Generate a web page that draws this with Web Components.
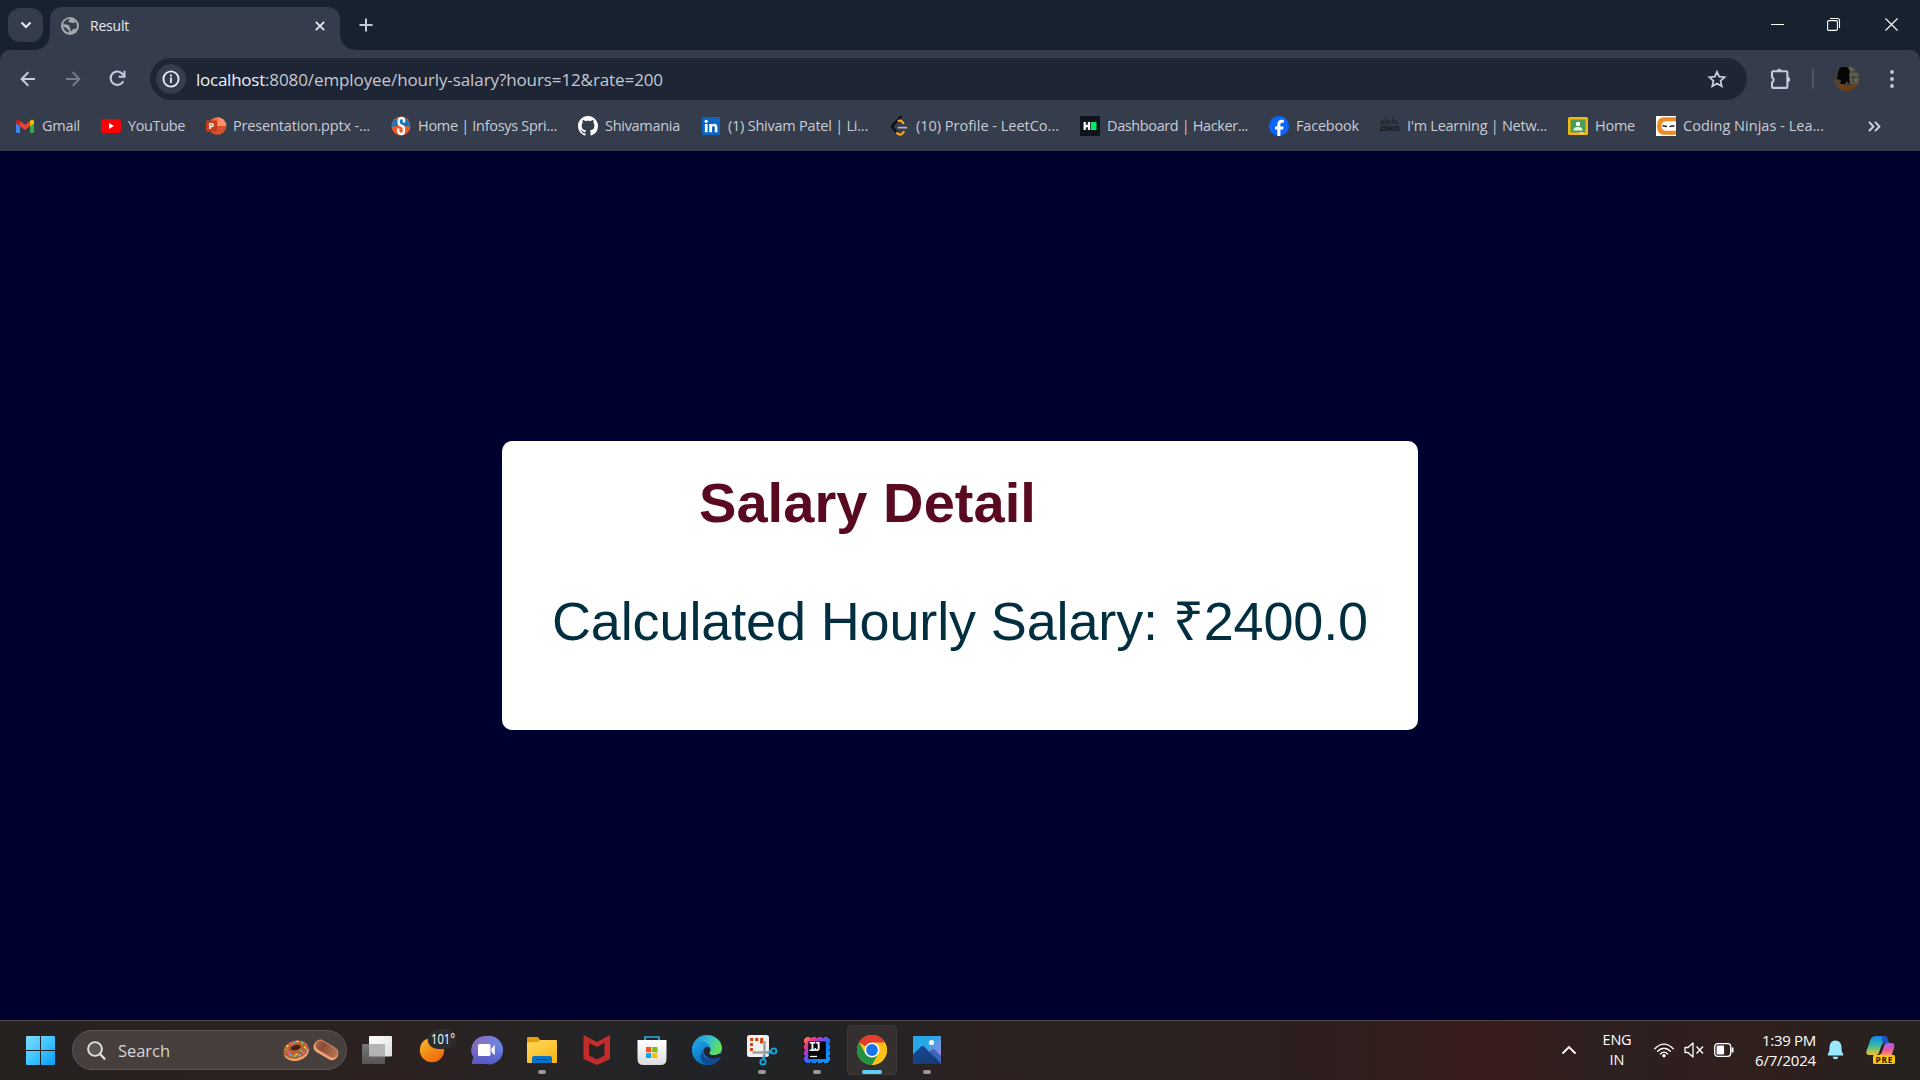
<!DOCTYPE html>
<html lang="en">
<head>
<meta charset="utf-8">
<title>Result</title>
<style>
html,body{margin:0;height:100%;overflow:hidden}
body{font-family:"Open Sans","Noto Sans",sans-serif;background:#00002f}
</style>
</head>
<body>
<desktop-screen>
  <tab-strip slot="browser">Result</tab-strip>
  <tool-bar slot="browser"><fit-text w="69" style="color:#eef0f6">localhost</fit-text><fit-text w="398">:8080/employee/hourly-salary?hours=12&amp;rate=200</fit-text></tool-bar>
  <bookmark-bar slot="browser">
    <bookmark-item icon="gmail" w="38">Gmail</bookmark-item>
    <bookmark-item icon="youtube" w="57">YouTube</bookmark-item>
    <bookmark-item icon="ppt" w="137">Presentation.pptx -...</bookmark-item>
    <bookmark-item icon="spring" w="139">Home | Infosys Spri...</bookmark-item>
    <bookmark-item icon="github" w="75">Shivamania</bookmark-item>
    <bookmark-item icon="linkedin" w="140">(1) Shivam Patel | Li...</bookmark-item>
    <bookmark-item icon="leetcode" w="143">(10) Profile - LeetCo...</bookmark-item>
    <bookmark-item icon="hacker" w="141">Dashboard | Hacker...</bookmark-item>
    <bookmark-item icon="facebook" w="63">Facebook</bookmark-item>
    <bookmark-item icon="cisco" w="140">I'm Learning | Netw...</bookmark-item>
    <bookmark-item icon="classroom" w="40">Home</bookmark-item>
    <bookmark-item icon="ninjas" w="141">Coding Ninjas - Lea...</bookmark-item>
  </bookmark-bar>
  <salary-card slot="page">
    <fit-text slot="title" w="337">Salary Detail</fit-text>
    <fit-text slot="value" w="816">Calculated Hourly Salary: ₹2400.0</fit-text>
  </salary-card>
  <task-bar slot="taskbar">
    <task-app icon="taskview"></task-app>
    <task-app icon="weather"></task-app>
    <task-app icon="chat"></task-app>
    <task-app icon="folder" running></task-app>
    <task-app icon="mcafee"></task-app>
    <task-app icon="store"></task-app>
    <task-app icon="edge"></task-app>
    <task-app icon="snip" running></task-app>
    <task-app icon="intellij" running></task-app>
    <task-app icon="chrome" running active></task-app>
    <task-app icon="photos" running></task-app>
  </task-bar>
</desktop-screen>
<script>
const FONT = 'font-family="Open Sans" font-weight="700"';
// name: [width, height, markup]
const ICONS = {
chevdown:[12,8,'<path d="M1.5 1.5 6 6l4.500-4.500" fill="none" stroke="#e6e9f2" stroke-width="2.200"/>'],
globe:[18,18,'<circle cx="9" cy="9" r="9" fill="#a4a7ac"/><path d="M8.500 1.800C6 1.800 2.800 4 2.200 7.200l3.300.3c2 .2 3 1 3 2.500 0 1 .9 1 1 1.900v2.300c1.500 0 1.800-.6 2-1.400.2-1 1.200-1.400 1.600-.7 1 .2 2-.5 2.600-1.700.5-2.300 0-4.500-1.400-6-.3 1.200-1 1.700-2.300 1.600-1.500 0-1.700-.6-2.800-.6-1.400 0-2-.7-1.800-1.700.2-.8 1.500-.4 1.100-1.900z" fill="#353c4b"/><path d="M2 8.600c.4 3.700 2.600 6.400 6 7.200v-2.300c-1.600-.3-2-1.100-2-2.400-2-.3-3.200-1-4-2.500z" fill="#353c4b"/>'],
tabclose:[10,10,'<path d="M.8.800l8.400 8.400M9.200.8.800 9.200" stroke="#e8eaf0" stroke-width="1.800"/>'],
plus:[14,14,'<path d="M7 .5v13M.5 7h13" stroke="#c3c9db" stroke-width="2"/>'],
min:[13,13,'<path d="M0 6.500h13" stroke="#fff"/>'],
max:[13,13,'<rect x=".6" y="2.600" width="9.800" height="9.800" rx="1.200" fill="none" stroke="#fff" stroke-width="1.100"/><path d="M3 .5h7.500a2 2 0 0 1 2 2V10" fill="none" stroke="#fff" stroke-width="1.100"/>'],
close:[13,13,'<path d="M.5.500l12 12M12.500.5l-12 12" stroke="#fff" stroke-width="1.100"/>'],
back:[16,16,'<path d="M15 8H2M8.300 1.300 1.600 8l6.700 6.700" fill="none" stroke="#c3cbe0" stroke-width="2"/>'],
fwd:[16,16,'<path d="M1 8h13M7.700 1.300 14.400 8l-6.700 6.700" fill="none" stroke="#757c8b" stroke-width="2"/>'],
reload:[17,17,'<path d="M14.300 11.200A6.700 6.700 0 1 1 13.700 4.200L15.200 6" fill="none" stroke="#c3cbe0" stroke-width="2.100"/><path d="M15.500.8v6H9.600" fill="none" stroke="#c3cbe0" stroke-width="2"/>'],
info:[30,30,'<circle cx="15" cy="15" r="15" fill="#353c4b"/><circle cx="15" cy="15" r="7.600" fill="none" stroke="#e6e9f2" stroke-width="1.900"/><path d="M15 13.500V19M15 10.500v2" stroke="#e6e9f2" stroke-width="1.800"/>'],
star:[20,20,'<path d="M10 2.800 12.200 7.600l5.400.6-4 3.700 1.100 5.300L10 14.500l-4.700 2.700 1.100-5.300-4-3.700 5.400-.6z" fill="none" stroke="#c8ccd8" stroke-width="1.800"/>'],
ext:[22,22,'<path d="M3 4.500q0-1.200 1.200-1.200h4.300h4.200h4.500q1.200 0 1.200 1.200v4.700v4v5.500q0 1.200-1.200 1.200H4.200q-1.200 0-1.200-1.200v-4.300a2.900 2.900 0 0 0 0-5.200z" fill="none" stroke="#c3cbe0" stroke-width="2.100" stroke-linejoin="round"/><path d="M7.700 3.500a2.500 2.700 0 0 1 5 0zM18.600 8.900a2.600 2.500 0 0 1 0 5z" fill="#c3cbe0"/>'],
avatar:[25,25,'<defs><clipPath id="a"><circle cx="12.500" cy="12.500" r="12.500"/></clipPath></defs><g clip-path="url(#a)"><rect width="25" height="25" fill="#3f3f38"/><path d="M15 0h10v18h-10z" fill="#5d604f"/><path d="M17 6h8M15 11h10M21 0v6M19 11v6" stroke="#34352d"/><path d="M6 1 13 1l3 4-1 5 1 8-4-3-1 4H6l1-5-4-1 1-6z" fill="#060505"/><path d="M0 14h5l2 5-6 1z" fill="#494735"/><path d="M2 18l8 0 5 2 7-3 3 3-4 5H5z" fill="#6b4018"/></g>'],
dots:[4,18,'<g fill="#c3cbe0"><circle cx="2" cy="2" r="1.900"/><circle cx="2" cy="9" r="1.900"/><circle cx="2" cy="16" r="1.900"/></g>'],
more:[13,11,'<path d="M1 .8 5.500 5.500 1 10.200M7 .8l4.500 4.700L7 10.200" fill="none" stroke="#d2d6e0" stroke-width="1.900"/>'],
gmail:[20,20,'<path d="M1 5.500v10.200q0 1.300 1.200 1.300H5V8.200z" fill="#4285f4"/><path d="M19 5.500v10.200q0 1.300-1.200 1.300H15V8.200z" fill="#34a853"/><path d="M15 5l1.200-1c1.200-.8 2.800 0 2.800 1.500v2L15 10.300z" fill="#fbbc04"/><path d="M5 10.300V5l5 3.800L15 5v5.300L10 14z" fill="#ea4335"/><path d="M1 7.500v-2C1 4 2.600 3.200 3.800 4L5 5v5.300z" fill="#c5221f"/>'],
youtube:[20,20,'<rect y="3" width="20" height="14" rx="3.200" fill="#f00"/><path d="M8 7v6l5-3z" fill="#fff"/>'],
ppt:[20,20,'<circle cx="11.500" cy="10" r="8.800" fill="#d35230"/><path d="M11.500 1.200A8.800 8.800 0 0 0 2.700 10h8.800z" fill="#ed6c47"/><path d="M11.500 1.200a8.800 8.800 0 0 1 8.800 8.800h-8.800z" fill="#ff8f6b"/><rect y="4.500" width="11" height="11" rx="1" fill="#c43e1c"/><text x="2.400" y="13.300" font-size="9" '+FONT+' fill="#fff">P</text>'],
spring:[20,20,'<circle cx="10" cy="10" r="9.500" fill="#f05a28"/><path d="M.5 11a9.500 9.500 0 1 1 19 0L10 9z" fill="#1478be"/><path d="M13 6.500V4.200Q13 2 10.500 2T7.700 4.500v2.600q0 1.700 2.600 2.600t2.600 3v2.500q0 2.800-2.700 2.800T7.200 15v-2.500" fill="none" stroke="#fff" stroke-width="2.400"/>'],
github:[20,20,'<path transform="scale(1.250)" fill="#fff" d="M8 0C3.580 0 0 3.580 0 8c0 3.540 2.290 6.530 5.470 7.590.4.070.55-.17.55-.38 0-.19-.01-.82-.01-1.490-2.010.37-2.530-.49-2.690-.94-.09-.23-.48-.94-.82-1.130-.28-.15-.68-.52-.01-.53.63-.01 1.080.58 1.230.82.72 1.210 1.870.87 2.330.66.07-.52.28-.87.510-1.070-1.780-.2-3.640-.89-3.640-3.950 0-.87.310-1.590.82-2.150-.08-.2-.36-1.020.08-2.120 0 0 .67-.21 2.200.82.64-.18 1.320-.27 2-.27s1.360.09 2 .27c1.530-1.040 2.200-.82 2.200-.82.44 1.100.16 1.920.08 2.120.51.56.82 1.270.82 2.150 0 3.070-1.870 3.750-3.650 3.950.29.25.54.73.54 1.480 0 1.070-.01 1.930-.01 2.200 0 .21.15.46.55.38A8.010 8.010 0 0 0 16 8c0-4.420-3.580-8-8-8z"/>'],
linkedin:[20,20,'<rect x="1" y="1" width="18" height="18" rx="1" fill="#0a66c2"/><g fill="#fff"><circle cx="5.200" cy="5.300" r="1.600"/><path d="M3.900 8h2.700v8.200H3.900zM8.300 8h2.500v1.200c.6-.9 1.500-1.400 2.600-1.400 2.200 0 3 1.400 3 3.700v4.700h-2.600v-4.300c0-1.200-.3-1.900-1.300-1.900s-1.500.7-1.500 1.900v4.300H8.300z"/></g>'],
leetcode:[20,20,'<path d="M12 .8 4.500 8.200Q2.300 10.500 4.500 12.800l3.300 3.700" fill="none" stroke="#0a0a0a" stroke-width="2.100" stroke-linecap="round"/><path d="M9.500 4.800q2-.6 3.500.8l1.300 1.500M8 17l1 1q2 1.200 3.900 0l1.800-1.900" fill="none" stroke="#ffa116" stroke-width="2.200" stroke-linecap="round"/><path d="M9.500 11.700h8" stroke="#b3b3b3" stroke-width="1.700" stroke-linecap="round"/>'],
hacker:[20,20,'<rect width="20" height="20" fill="#0e141e"/><path d="M4.700 6v8M9 6v8M4.700 10H9" stroke="#fff" stroke-width="2.300"/><rect x="11" y="6" width="5.500" height="8" fill="#00ea64"/>'],
facebook:[20,20,'<circle cx="10" cy="10" r="10" fill="#0866ff"/><path d="M8.300 20v-6.500H6v-3h2.300V8.800c0-3.400 1.500-5 4.700-5 .7 0 1.400.1 1.800.2v2.700h-1.400c-1.500 0-2 .6-2 2v1.800h3.200l-.5 3h-2.700V20z" fill="#fff"/>'],
cisco:[20,20,'<path d="M1 5v4M3.300 4v4M5.600 1.500v6M8 4v4M10.300 5v4M12.600 1.500v6M15 4v4M17.300 5v4" stroke="#1b1f27" stroke-width="1.300" stroke-dasharray="1.600 .5"/><text x="-.3" y="15" font-size="8.500" textLength="20" font-family="Open Sans" font-weight="800" fill="#1b1f27">cisco</text>'],
classroom:[20,20,'<rect y="1" width="20" height="18" rx="1.500" fill="#f6b90c"/><rect x="2.500" y="3.500" width="15" height="13" fill="#4a9c5b"/><circle cx="10" cy="8" r="2.200" fill="#fff"/><path d="M5.500 14.500c0-3 2-3.500 4.500-3.500s4.500.5 4.500 3.500z" fill="#e6f4e8"/><path d="M11.500 16.500h4v1h-4z" fill="#eee"/>'],
ninjas:[20,20,'<rect width="20" height="20" fill="#fff"/><path d="M20 1.200H8Q1 1.200 1 10t7 8.800h12v-4H10q-4.500 0-4.500-4.800T10 5.200h10z" fill="#ee8b22"/><path d="M6.500 9.700 11 10.500M13.500 10.500l5-.8" stroke="#252525" stroke-width="1.500"/>'],
win:[30,30,'<defs><linearGradient id="w" x1="0" y1="0" x2="30" y2="30" gradientUnits="userSpaceOnUse"><stop stop-color="#80dcff"/><stop offset=".5" stop-color="#3cc4ff"/><stop offset="1" stop-color="#0799fa"/></linearGradient></defs><path transform="translate(0 1)" fill="url(#w)" d="M1 0h13v14H0V1q0-1 1-1zM15 0h13q1 0 1 1v13H15zM0 15h14v14H1q-1 0-1-1zM15 15h14v13q0 1-1 1H15z"/>'],
mag:[19,19,'<circle cx="8" cy="8" r="6.900" fill="#5a5654" stroke="#e3e1e0" stroke-width="1.900"/><path d="M13 13l4.500 4.700" stroke="#e3e1e0" stroke-width="2.300" stroke-linecap="round"/>'],
snacks:[56,24,'<defs><linearGradient id="sn" x2="1" y2="0"><stop stop-color="#b06a4c"/><stop offset=".3" stop-color="#8a4c38"/><stop offset="1" stop-color="#b97352"/></linearGradient></defs><g transform="rotate(-14 13 12)"><ellipse cx="13" cy="13.700" rx="12.700" ry="9" fill="#efa66c"/><ellipse cx="13" cy="11.400" rx="12.600" ry="9" fill="#b36232"/><ellipse cx="13.500" cy="9.700" rx="5.200" ry="2.700" fill="#43200f"/><path d="M8 10.500q5.500 4.500 11 0-2 5-11 0" fill="#d48b50"/></g><g stroke-width="1.700" stroke-linecap="round"><path d="M4 8.500l1-1M14 3.500h1M21.500 9l1 1M13 16.500l1-.3" stroke="#ffd443"/><path d="M8 5l1 1M5 14l1 .5M20 14.500l1-.5M23 6.500v.5" stroke="#fb5cb4"/><path d="M11 18h1M19 4.500l.5 1M3 11.500h.5M18 12.500h.5" stroke="#59e078"/><path d="M16 17.500l1-.5M24 12v.5M8 17l-1-.5M11 4.500h.5" stroke="#55bff5"/><path d="M9 14.500h1M18 8l1-.5M2.500 14v1" stroke="#f44848"/></g><g transform="rotate(31 43 11.500)"><rect x="30" y="6.500" width="26.500" height="12" rx="6" fill="#efaa78"/><rect x="30.700" y="5.600" width="25" height="10.400" rx="5.200" fill="url(#sn)" stroke="#dc9264" stroke-width=".9"/></g>'],
taskview:[40,40,'<defs><linearGradient id="tv" x2="1" y2="1"><stop stop-color="#fff"/><stop offset="1" stop-color="#dedede"/></linearGradient><linearGradient id="tv2" x2="0" y2="1"><stop stop-color="#777"/><stop offset="1" stop-color="#555"/></linearGradient></defs><rect x="12" y="6" width="23" height="20.500" rx="1" fill="url(#tv)"/><rect x="5" y="14" width="23" height="20" rx="1" fill="url(#tv2)"/><path d="M12 14h16v12.500H12z" fill="#b5b4b4"/>'],
weather:[40,40,'<defs><linearGradient id="we" x2=".7" y2="1"><stop stop-color="#f8bd2b"/><stop offset="1" stop-color="#f0660c"/></linearGradient></defs><circle cx="20" cy="20" r="12.200" fill="url(#we)"/><rect x="15.500" y="-1" width="29" height="20" rx="10" fill="#2c2d2e"/><text x="19" y="14" font-size="14" textLength="24" lengthAdjust="spacingAndGlyphs" font-family="Open Sans" font-weight="500" fill="#fff">101°</text>'],
chat:[40,40,'<defs><linearGradient id="ch" x1="0" y1=".2" x2="1" y2=".4"><stop stop-color="#8c69b8"/><stop offset="1" stop-color="#688be8"/></linearGradient><linearGradient id="ch2" x2="0" y2="1"><stop offset=".3" stop-color="#5558c8" stop-opacity="0"/><stop offset="1" stop-color="#5558c8"/></linearGradient></defs><path d="M19.500 6A14.200 14.200 0 1 1 19.500 34H6q-1.500 0-1-1.400l1.600-5A14 14 0 0 1 19.500 6z" fill="url(#ch)"/><path d="M19.500 6A14.200 14.200 0 1 1 19.500 34H6q-1.500 0-1-1.400l1.600-5A14 14 0 0 1 19.500 6z" fill="url(#ch2)"/><rect x="11" y="14" width="12.500" height="12" rx="1.500" fill="#fff"/><path d="M24.500 18.500 27.800 15V25.200L24.500 22z" fill="#fff"/>'],
folder:[40,40,'<defs><linearGradient id="fo" x2=".8" y2="1"><stop stop-color="#ffd95e"/><stop offset="1" stop-color="#f8b816"/></linearGradient></defs><path d="M5 8q0-1 1-1h10l2.500 3.500H34q1 0 1 1V16H5z" fill="#e2a10b"/><path d="M5 13q0-.7.8-.7h9.700L18.500 10H34q1 0 1 1v21q0 1-1 1H6q-1 0-1-1z" fill="url(#fo)"/><path d="M10 33V28q0-2 2-2h16q2 0 2 2v5z" fill="#0873c4"/><path d="M13.500 29.500h13" stroke="#064a8b"/>'],
mcafee:[40,40,'<path d="M6.500 5 20 12 33 5V29L20 35 6.500 29zM12 13v12.500l8 4 7.500-4V13L20 17z" fill="#c42c2c" fill-rule="evenodd"/>'],
store:[40,40,'<defs><linearGradient id="st" x2="0" y2="1"><stop stop-color="#fff"/><stop offset="1" stop-color="#dcdcdc"/></linearGradient></defs><path d="M13 12V7h14v5" fill="none" stroke="#24aee6" stroke-width="1.700"/><path d="M5.500 10h29V29q0 6-6 6h-17q-6 0-6-6z" fill="url(#st)"/><path d="M14 17h5.300v5.300H14z" fill="#f35325"/><path d="M20.200 17h5.300v5.300h-5.300z" fill="#81bc06"/><path d="M14 23.200h5.300V28H14z" fill="#05a6f0"/><path d="M20.200 23.200h5.300V28h-5.300z" fill="#ffba08"/>'],
edge:[40,40,'<defs><linearGradient id="e1" x1="0" y1=".2" x2="1" y2=".6"><stop stop-color="#178fd2"/><stop offset=".5" stop-color="#35bfd6"/><stop offset="1" stop-color="#66e34a"/></linearGradient><linearGradient id="e2" x1="0" y1="0" x2=".6" y2="1"><stop stop-color="#1fa6e8"/><stop offset="1" stop-color="#0868bd"/></linearGradient></defs><circle cx="20" cy="20" r="15" fill="#1272c4"/><path d="M5 20C5 11 12 5 20 5s15 6 15 13c0 6-8 9-12.500 6-.8-.8.900-1.700.900-4.500C23 14 18 11 13 12S6 16 5 20z" fill="url(#e1)"/><path d="M5 20c.3-6 5-8.500 9.300-8.500 5.700 0 8.700 3.500 9 7-1.400-2-6.500-1.500-7.300 3.500-.8 5.500 3.700 10.800 9.500 12C15 38 5 30 5 20z" fill="url(#e2)"/><path d="M16.200 21c-1 6 5 10 11.500 9 2-.3 4-1.300 5.500-2C30 34 23 37 18 34c-5-3.500-6-9-1.800-13z" fill="#114a91"/><path d="M16.500 20q2-4.500 6.800-2c.7 3.500-1.600 4.500-.8 6 2.300 1.800 7 1.600 12.500-.9v2L32 28c-5 2-15 1-15.500-8z" fill="#22242a"/><path d="M32.700 27c-4 2.500-10 2.300-13.300-.5 3 7 10 5.500 13.300.5z" fill="#114a91"/>'],
snip:[40,40,'<rect x="5" y="5" width="22" height="22" rx="2.500" fill="#f1f1f1"/><path d="M8.200 9.500h3M13.200 9.500h3M18.200 9.500h3M9.500 13v3M9.500 18v3M19.500 11v2.500" fill="none" stroke="#d83b01" stroke-width="2.800"/><path d="M22.500 11v13l-1.500 4M10.500 22.500h14l4-1.500" fill="none" stroke="#9aa0a5" stroke-width="2.400"/><g fill="none" stroke="#1ba1e0" stroke-width="1.900"><circle cx="31.800" cy="21" r="2.600"/><circle cx="21" cy="32" r="2.600"/><path d="M25.500 23.500l4-1.500M23 25.500 22 29"/></g>'],
intellij:[40,40,'<defs><linearGradient id="ij" x2="1" y2="1"><stop stop-color="#ff8a35"/><stop offset=".22" stop-color="#e8348b"/><stop offset=".42" stop-color="#7a49e8"/><stop offset=".6" stop-color="#087cfa"/><stop offset="1" stop-color="#1698f0"/></linearGradient></defs><rect x="7" y="7" width="26" height="26" fill="url(#ij)"/><path d="M7 7.400h26M7 32.600h26M7.400 7v26M32.600 7v26" stroke="#08080c" stroke-width=".9" stroke-dasharray="2 4"/><rect x="11.300" y="11.500" width="17.500" height="17.500" fill="#07040c"/><path d="M13 26.500h7" stroke="#fff" stroke-width="1.300"/><text x="11.800" y="21" font-size="12" font-family="Liberation Mono" font-weight="700" textLength="12" fill="#fff">IJ</text>'],
chrome:[40,40,'<circle cx="20" cy="20" r="15" fill="#fbc116"/><path d="M20 20 7 12.500A15 15 0 0 1 33 12.500z" fill="#e33b2e"/><path d="M7 12.500A15 15 0 0 0 20 35L26.500 23.700 13.500 23.700z" fill="#229342"/><path d="M20 12.500h13A15 15 0 0 1 20 35l6.500-11.300z" fill="#fbc116"/><circle cx="20" cy="20" r="7.500" fill="#fff"/><circle cx="20" cy="20" r="5.900" fill="#1a73e8"/>'],
photos:[40,40,'<defs><linearGradient id="ph" x2="1" y2=".9"><stop offset=".4" stop-color="#27a9e9"/><stop offset="1" stop-color="#b87dd6"/></linearGradient><linearGradient id="ph2" x2=".6" y2="1"><stop stop-color="#174c94"/><stop offset="1" stop-color="#143b77"/></linearGradient></defs><rect x="6" y="6" width="28" height="28" rx="1" fill="url(#ph)"/><path d="M19 25l6-5.500q1.300-1 2.500 0L34 26v7.500l-5 .5z" fill="#3d64b8"/><path d="M6 24.500l8-8q1.500-1.200 3 0L33.500 33q0 1-1 1H7q-1 0-1-1z" fill="url(#ph2)"/><circle cx="24.500" cy="12.500" r="2.600" fill="#f3f4f5"/>'],
up:[14,8,'<path d="M1 7l6-6 6 6" fill="none" stroke="#fff" stroke-width="1.800" stroke-linecap="round"/>'],
wifi:[20,15,'<g fill="none" stroke="#fff" stroke-width="1.350" stroke-linecap="round"><path d="M.8 5.700Q10-3.500 19.200 5.700M3.600 8.300q6.400-6.200 12.800 0M6.300 10.900q3.700-3.500 7.400 0"/></g><circle cx="10" cy="12.700" r="1.700" fill="#fff"/>'],
vol:[20,16,'<path d="M1 5.500h3L9 1v14l-5-4.500H1z" fill="none" stroke="#fff" stroke-width="1.300" stroke-linejoin="round"/><path d="M12.500 4.500l6.500 7M19 4.500l-6.500 7" stroke="#fff" stroke-width="1.300"/>'],
batt:[20,14,'<rect x=".7" y=".7" width="16" height="12.600" rx="3" fill="none" stroke="#fff" stroke-width="1.300"/><path d="M18.500 4.500v5" stroke="#fff" stroke-width="2"/><rect x="2.600" y="2.600" width="7.500" height="8.800" rx="1.200" fill="#fff"/>'],
bell:[17,20,'<path d="M8.500.5q5.700 0 6 6.500l.2 4 1.600 3.500q.3 1-.8 1h-14q-1.100 0-.8-1L2.300 11l.2-4Q2.800.5 8.500.5zM5.600 16.700h5.800q-.7 2.500-2.900 2.500T5.600 16.700z" fill="#99e8ff"/>'],
copilot:[30,30,'<defs><linearGradient id="c1" x2="0" y2="1"><stop stop-color="#1b82e8"/><stop offset=".45" stop-color="#2bb6b0"/><stop offset="1" stop-color="#f0c628"/></linearGradient><linearGradient id="c2" x2="0" y2="1"><stop stop-color="#ac5cf5"/><stop offset=".6" stop-color="#e75a9b"/><stop offset="1" stop-color="#ff9454"/></linearGradient></defs><path d="M9.500 1h9q2 0 3 3l1.200 4h-4q-2.500 0-3.300 2.800L13 17.500Q12.300 20 9.500 20h-6Q-.5 20 .5 16L4.500 4.500Q6 1 9.500 1z" fill="url(#c1)"/><path d="M16 1h3q2 0 2.700 3l1 4h-4q-1.500 0-2.200 1z" fill="#1c55c4"/><path d="M21 8h4q4 0 3.300 4l-2.500 8H12q3 0 4-3l2-6q.8-3 3-3z" fill="url(#c2)"/><rect x="7" y="20" width="22" height="9" rx="1.500" fill="#fdc60b"/><text x="9.500" y="27.600" font-size="8.300" textLength="17" '+FONT+' fill="#201a00">PRE</text>']
};
function el(name, html, after){
  customElements.define(name, class extends HTMLElement{
    connectedCallback(){
      if(this.shadowRoot) return;
      this.attachShadow({mode:'open'}).innerHTML = typeof html==='function' ? html(this) : html;
      if(after) after(this);
    }
  });
}
el('desktop-screen', `<style>
:host{display:flex;flex-direction:column;width:1920px;height:1080px;background:#00002f}
main{flex:1;display:flex;justify-content:center;align-items:flex-start;padding-top:290px}
</style><slot name="browser"></slot><main><slot name="page"></slot></main><slot name="taskbar"></slot>`);

el('tab-strip', `<style>
:host{display:flex;height:50px;background:#182130;color:#e6e9f0;font-size:14px;box-sizing:border-box}
.s{display:flex;align-items:center;justify-content:center;width:35px;height:34px;border-radius:12px;background:#353c4b;margin:8px 7px 0 8px;position:relative;z-index:1}
.tab{display:flex;align-items:center;width:290px;height:43px;margin-top:7px;padding:0 15px 6px 11px;box-sizing:border-box;border-radius:12px 12px 0 0;background:#353c4b;position:relative}
.tab:before,.tab:after{content:"";position:absolute;bottom:0;width:15px;height:15px}
.tab:before{left:-15px;background:radial-gradient(circle at 0 0,transparent 14.500px,#353c4b 15px)}
.tab:after{right:-15px;background:radial-gradient(circle at 100% 0,transparent 14.500px,#353c4b 15px)}
fit-text{margin-left:11px;flex:none}
.tab app-icon:last-child{margin-left:auto}
.plus{margin:18px 0 0 19px}
.win{display:flex;gap:43px;margin:18px 22px 0 auto}
.win app-icon+app-icon+app-icon{margin-left:2px}
</style><div class="s"><app-icon name="chevdown"></app-icon></div>
<div class="tab"><app-icon name="globe"></app-icon><fit-text w="39"><slot></slot></fit-text><app-icon name="tabclose"></app-icon></div>
<app-icon class="plus" name="plus"></app-icon>
<div class="win"><app-icon name="min"></app-icon><app-icon name="max"></app-icon><app-icon name="close"></app-icon></div>`);

el('tool-bar', `<style>
:host{display:block;background:#182130}
.bar{display:flex;align-items:center;height:57px;padding:0 23px 0 20px;background:#353c4b;border-radius:10px 10px 0 0;box-sizing:border-box}
.nav{display:flex;gap:29px;width:130px;align-items:center}
.nav app-icon:last-child{margin-left:-1px}
.omni{display:flex;align-items:center;width:1597px;height:42px;box-sizing:border-box;border-radius:21px;background:#1e2636;color:#c5c8d0;font-size:17px;padding:1px 20px 0 6px}
.url{display:flex;margin:0 auto 0 10px}
.sep{width:2px;height:20px;background:#505868;margin:0 20px 0 21px}
.ext{margin-left:22px}.dots{margin-left:31px}
</style><div class="bar"><div class="nav"><app-icon name="back"></app-icon><app-icon name="fwd"></app-icon><app-icon name="reload"></app-icon></div>
<div class="omni"><app-icon name="info"></app-icon><div class="url"><slot></slot></div><app-icon name="star"></app-icon></div>
<app-icon class="ext" name="ext"></app-icon><div class="sep"></div><app-icon name="avatar"></app-icon><app-icon class="dots" name="dots"></app-icon></div>`);

el('bookmark-bar', `<style>
:host{display:flex;gap:20px;align-items:flex-start;height:44px;padding:9px 0 0 15px;box-sizing:border-box;background:#353c4b;color:#c8ccd6;font-size:14.500px}
.more{margin:5px 0 0 23px}
</style><slot></slot><app-icon class="more" name="more"></app-icon>`);
el('bookmark-item', h=>`<style>:host{display:flex;align-items:center;gap:7px;padding-right:1px;height:20px;line-height:20px}</style>
<app-icon name="${h.getAttribute('icon')}"></app-icon><fit-text w="${h.getAttribute('w')}"><slot></slot></fit-text>`);

el('salary-card', `<style>
:host{display:flex;flex-direction:column;width:916px;height:289px;box-sizing:border-box;padding:30px 50px;border-radius:10px;background:#fff;font-family:"Liberation Sans",Arial,sans-serif}
h1{margin:0 0 0 147px;font-size:56px;line-height:64px;color:#590a20}
p{margin:55px 0 0;font-size:54px;line-height:62px;color:#022f40}
</style><h1><slot name="title"></slot></h1><p><slot name="value"></slot></p>`);

el('task-bar', `<style>
:host{display:flex;align-items:center;height:60px;box-sizing:border-box;border-top:1px solid #504a48;padding:0 0 1px 26px;color:#fff;font-size:15px;
background:linear-gradient(90deg,#252220 0,#2a2120 200px,#2c2120 400px,#262425 560px,#222326 700px,#232325 850px,#2d2121 980px,#2b2121 1150px,#2f1f1e 1350px,#3a1c1b 1500px,#2d2020 1600px,#301f1d 1760px,#24221f 1920px)}
.search{display:flex;align-items:center;width:275px;height:40px;box-sizing:border-box;margin-left:16px;padding:0 7px 0 14px;border:1px solid #5c5553;border-radius:20px;background:#463f3d;color:#d8d5d4;font-size:16.500px}
.search fit-text{margin:0 auto 0 12px}
.apps{display:flex;gap:5px;margin-left:5px}
.tray{display:flex;align-items:center;margin-left:auto;padding-right:24px}
.lang{text-align:center;line-height:20px;font-size:14.500px;width:34px;margin:0 20px 0 24px}
.sys{display:flex;align-items:center;gap:10px}
.time{display:flex;flex-direction:column;align-items:flex-end;line-height:20px;margin:0 11px 0 21px;padding-bottom:1px}
.bell{margin-right:22px}
</style><app-icon name="win"></app-icon>
<div class="search"><app-icon name="mag"></app-icon><fit-text w="52">Search</fit-text><app-icon name="snacks"></app-icon></div>
<div class="apps"><slot></slot></div>
<div class="tray"><app-icon name="up"></app-icon><div class="lang"><fit-text w="29">ENG</fit-text><fit-text w="15">IN</fit-text></div>
<div class="sys"><app-icon name="wifi"></app-icon><app-icon name="vol"></app-icon><app-icon name="batt"></app-icon></div>
<div class="time"><fit-text w="54">1:39 PM</fit-text><fit-text w="61">6/7/2024</fit-text></div>
<app-icon class="bell" name="bell"></app-icon><app-icon name="copilot"></app-icon></div>`);
el('task-app', h=>`<style>
:host{display:flex;flex-direction:column;align-items:center;width:50px;height:50px;box-sizing:border-box;padding-top:5px;border-radius:5px}
:host([active]){background:#343030;box-shadow:inset 0 0 0 1px #3e3a3a}
i{display:none;width:8px;height:4px;border-radius:2px;background:#999}
:host([running]) i{display:block}
:host([active]) i{width:20px;background:#60cdff}
</style><app-icon name="${h.getAttribute('icon')}"></app-icon><i></i>`);

el('app-icon', h=>{const [w,t,m]=ICONS[h.getAttribute('name')];
  return `<style>:host{display:block;flex:none;width:${w}px;height:${t}px}svg{display:block;overflow:visible}</style><svg width="${w}" height="${t}" viewBox="0 0 ${w} ${t}">${m}</svg>`});

// Spreads the letters of its text evenly so that the run is exactly w pixels wide.
el('fit-text', `<style>:host{display:inline-block;white-space:nowrap}span{display:inline-block}</style><span><slot></slot></span>`, h=>{
  const span=h.shadowRoot.querySelector('span'), w=+h.getAttribute('w');
  let text=h.textContent;
  const inner=h.querySelector('slot');
  if(inner) text=inner.assignedNodes().map(n=>n.textContent).join('');
  const n=text.trim().length;
  span.style.letterSpacing=(w-span.getBoundingClientRect().width)/n+'px';
  h.style.width=w+'px';
});
</script>
</body>
</html>
